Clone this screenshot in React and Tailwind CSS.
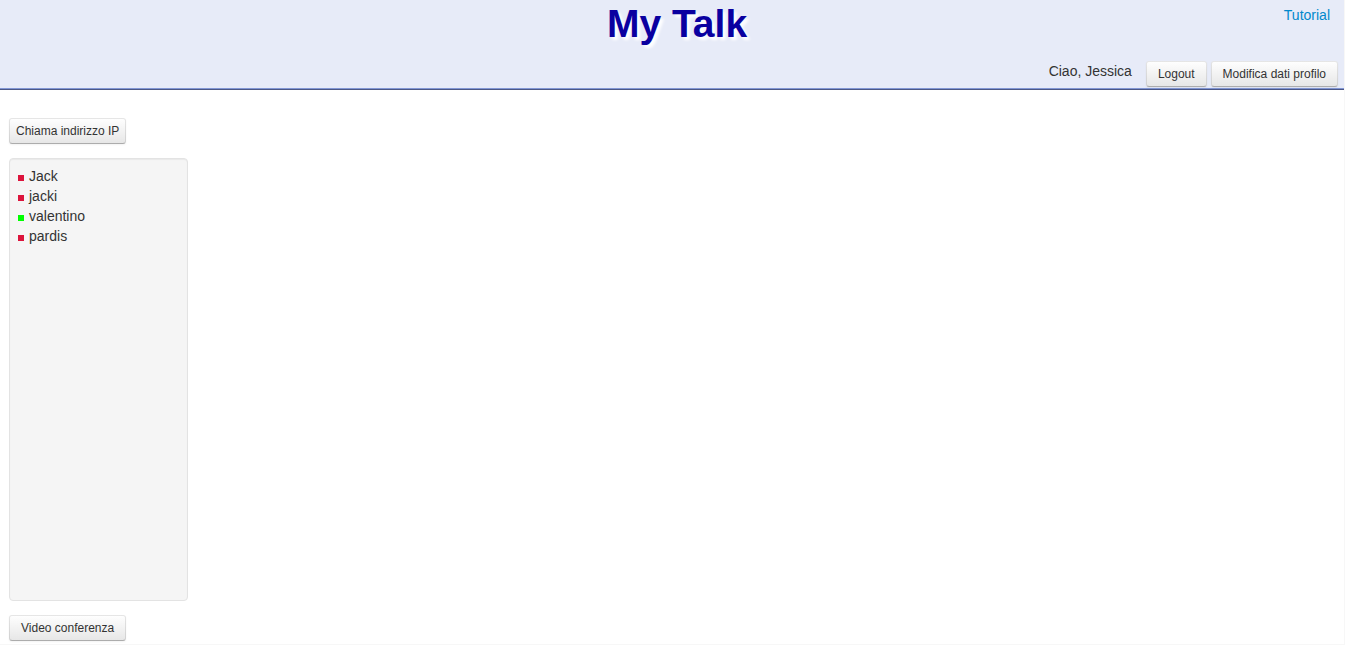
const contacts = [
  { name: 'Jack', online: false },
  { name: 'jacki', online: false },
  { name: 'valentino', online: true },
  { name: 'pardis', online: false },
];

function Button({ children, className = 'px-[11px]' }) {
  return (
    <button
      type="button"
      className={`h-[26px] rounded-[3px] border border-black/10 border-b-black/25 bg-linear-to-b from-white to-[#e6e6e6] bg-origin-border text-[12px] leading-5 whitespace-nowrap text-[#333333] shadow-[inset_0_1px_0_rgba(255,255,255,0.2),0_1px_2px_rgba(0,0,0,0.05)] ${className}`}
    >
      {children}
    </button>
  );
}

export default function App() {
  return (
    <div className="flex min-h-screen flex-col border-r border-b border-[#f7f7f7] bg-white font-['Liberation_Sans',Arial,sans-serif] text-[14px] leading-5 text-[#333333]">
      <header className="border-b border-[#4c5785] bg-[#e7ebf8]">
        <div className="flex h-[89px] flex-col justify-between border-b border-[#8196d4]">
          <div className="grid grid-cols-[1fr_auto_1fr] items-start">
            <h1 className="col-start-2 pt-1 pl-[10px] text-[39px] leading-10 font-bold text-[#0a00a0] [text-shadow:3px_3px_3px_#ffffff]">
              My Talk
            </h1>
            <a href="#tutorial" className="justify-self-end pt-[5px] pr-[14px] text-[#0088cc]">
              Tutorial
            </a>
          </div>
          <div className="flex items-start justify-end gap-1 pr-[6px] pb-px">
            <span className="pr-[10px]">Ciao, Jessica</span>
            <Button>Logout</Button>
            <Button>Modifica dati profilo</Button>
          </div>
        </div>
      </header>
      <main className="flex flex-1 flex-col items-start px-[9px] pt-7 pb-[3px]">
        <Button className="px-[6px]">Chiama indirizzo IP</Button>
        <ul className="my-[14px] w-[179px] flex-1 rounded-[4px] border border-[#e3e3e3] bg-[#f5f5f5] px-2 py-[7px] shadow-[inset_0_1px_1px_rgba(0,0,0,0.05)]">
          {contacts.map(({ name, online }) => (
            <li key={name} className="flex items-center gap-[5px]">
              <span
                className={`mt-[3px] size-[6px] ${online ? 'bg-[#00ff00]' : 'bg-[#dc143c]'}`}
              />
              {name}
            </li>
          ))}
        </ul>
        <Button>Video conferenza</Button>
      </main>
    </div>
  );
}
